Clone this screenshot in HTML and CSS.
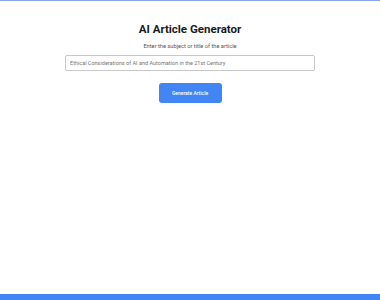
FILE: index.html
```html
<!DOCTYPE html>
<html>
<head>
<meta charset="utf-8">
<link rel="stylesheet" href="styles.css">
</head>
<body>
<div class="page">
  <main class="main">
    <h1 class="title">AI Article Generator</h1>
    <p class="subtitle">Enter the subject or title of the article</p>
    <input class="topic" type="text" placeholder="Ethical Considerations of AI and Automation in the 21st Century">
    <button class="generate">Generate Article</button>
  </main>
  <footer class="footer"></footer>
</div>
</body>
</html>
```
FILE: styles.css
```css
html, body {
  margin: 0;
  padding: 0;
  background: #ffffff;
}
.page {
  height: 300px;
  display: flex;
  flex-direction: column;
  border-top: 1px solid #8aa6e6;
  box-sizing: border-box;
  font-family: Roboto, "Liberation Sans", sans-serif;
}
.main {
  flex: 1;
  display: flex;
  flex-direction: column;
  align-items: center;
  padding-top: 21px;
}
.title {
  margin: 0;
  font-size: 11.5px;
  font-weight: 700;
  color: #1a1a1a;
  line-height: 14px;
}
.subtitle {
  margin: 7px 0 0;
  font-size: 5.7px;
  color: #555;
  line-height: 7px;
}
.topic {
  margin-top: 5px;
  width: 250px;
  height: 16px;
  box-sizing: border-box;
  border: 1px solid #c8c8c8;
  border-radius: 2px;
  padding: 0 4px;
  font-family: Roboto, "Liberation Sans", sans-serif;
  font-size: 5.5px;
  outline: none;
}
.topic::placeholder {
  color: #757575;
}
.generate {
  margin-top: 12px;
  width: 63px;
  height: 20px;
  border: none;
  border-radius: 3px;
  background: #4285f4;
  color: #ffffff;
  font-family: Roboto, "Liberation Sans", sans-serif;
  font-size: 5px;
  font-weight: 500;
  padding: 0;
}
.footer {
  height: 6px;
  background: #4285f4;
}
```
